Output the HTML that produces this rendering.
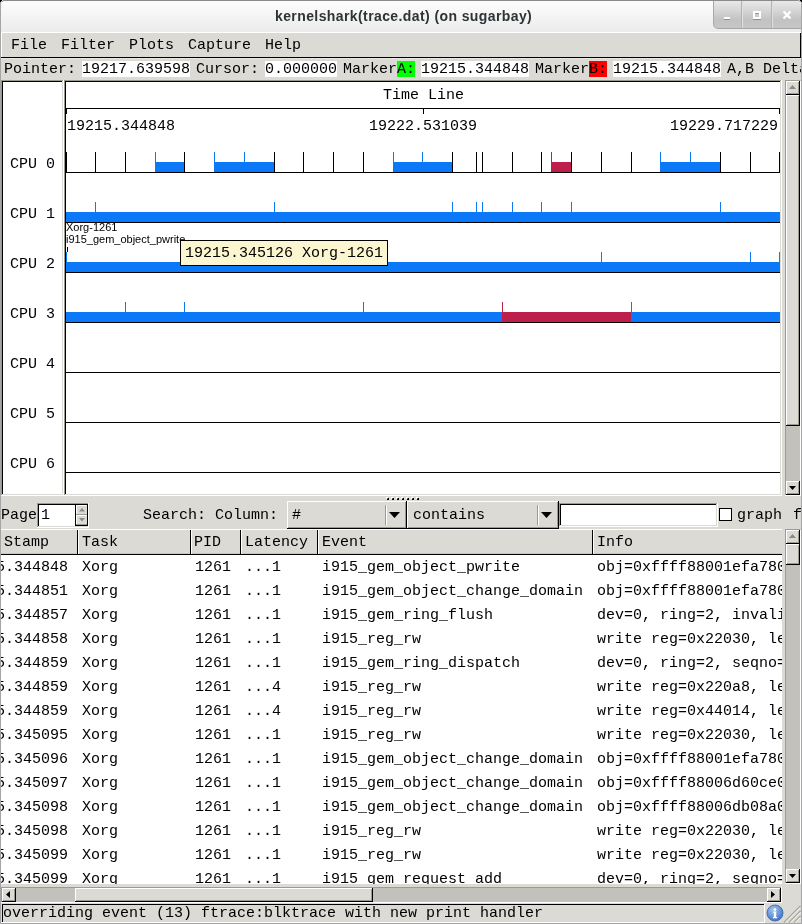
<!DOCTYPE html>
<html><head><meta charset="utf-8">
<style>
*{box-sizing:border-box;margin:0;padding:0}
html,body{width:802px;height:924px;overflow:hidden;background:#dcdad5}
body{position:relative;font-family:"Liberation Mono",monospace;font-size:15px;line-height:17px;color:#000}
.a{position:absolute}
svg.a{display:block}
.t{position:absolute;will-change:transform;white-space:pre;font-family:"Liberation Mono",monospace;font-size:15px;line-height:17px;color:#000}
.s{position:absolute;will-change:transform;white-space:pre;font-family:"Liberation Sans",sans-serif;font-size:11px;line-height:13px;color:#000}
</style></head><body>
<div class="a" style="left:0;top:0;width:802px;height:32px;background:linear-gradient(#fdfdfd,#ebebeb);border-top:1px solid #8a8a8a;border-radius:5px 5px 0 0"></div>
<div class="a" style="left:1px;top:32px;width:800px;height:1px;background:#fff;"></div>
<div class="a" style="left:275px;top:8px;will-change:transform;letter-spacing:0.4px;font:bold 14px/17px 'Liberation Sans',sans-serif;color:#2e3436;white-space:pre">kernelshark(trace.dat) (on sugarbay)</div>
<div class="a" style="left:713px;top:1px;width:88px;height:28px;background:linear-gradient(#e9e9e9 0%,#d6d6d6 35%,#c2c2c2 70%,#c6c6c6 100%);border-radius:0 5px 0 5px;border-left:1px solid #a9a9a9;border-bottom:1px solid #a5a5a5"></div>
<div class="a" style="left:741px;top:1px;width:1px;height:27px;background:#b3b3b3;"></div>
<div class="a" style="left:742px;top:1px;width:1px;height:27px;background:#e0e0e0;"></div>
<div class="a" style="left:771px;top:1px;width:1px;height:27px;background:#b3b3b3;"></div>
<div class="a" style="left:772px;top:1px;width:1px;height:27px;background:#e0e0e0;"></div>
<div class="a" style="left:724px;top:17px;width:6px;height:2px;background:#fff;"></div>
<div class="a" style="left:724px;top:19px;width:6px;height:1px;background:#8f8f8f;"></div>
<div class="a" style="left:753px;top:11px;width:8px;height:8px;border:2px solid #fff"></div>
<div class="a" style="left:755px;top:13px;width:4px;height:1px;background:#9a9a9a;"></div>
<div class="a" style="left:753px;top:19px;width:8px;height:1px;background:#8f8f8f;"></div>
<svg class="a" style="left:782px;top:10px" width="10" height="10"><path d="M1.5 1.5L8.5 8.5M8.5 1.5L1.5 8.5" stroke="#fff" stroke-width="2.2"/></svg>
<div class="a" style="left:1px;top:57px;width:800px;height:1px;background:#000;"></div>
<div class="a" style="left:800px;top:33px;width:1px;height:25px;background:#000;"></div>
<div class="a" style="left:1px;top:32px;width:1px;height:25px;background:#fff;"></div>
<div class="t" style="left:11px;top:37px;">File</div>
<div class="t" style="left:61px;top:37px;">Filter</div>
<div class="t" style="left:129px;top:37px;">Plots</div>
<div class="t" style="left:188px;top:37px;">Capture</div>
<div class="t" style="left:265px;top:37px;">Help</div>
<div class="a" style="left:1px;top:58px;width:800px;height:1px;background:#e8e6e1;"></div>
<div class="t" style="left:4px;top:61px;">Pointer:</div>
<div class="a" style="left:82px;top:61px;width:108px;height:16px;background:#fff;"></div>
<div class="t" style="left:82px;top:61px;">19217.639598</div>
<div class="a" style="left:265px;top:61px;width:72px;height:16px;background:#fff;"></div>
<div class="t" style="left:265px;top:61px;">0.000000</div>
<div class="a" style="left:397px;top:61px;width:18px;height:16px;background:#00ff00;"></div>
<div class="t" style="left:397px;top:61px;">A:</div>
<div class="a" style="left:421px;top:61px;width:108px;height:16px;background:#fff;"></div>
<div class="t" style="left:421px;top:61px;">19215.344848</div>
<div class="a" style="left:589px;top:61px;width:18px;height:16px;background:#ff0000;"></div>
<div class="t" style="left:589px;top:61px;">B:</div>
<div class="a" style="left:613px;top:61px;width:108px;height:16px;background:#fff;"></div>
<div class="t" style="left:613px;top:61px;">19215.344848</div>
<div class="t" style="left:196px;top:61px;">Cursor:</div>
<div class="t" style="left:343px;top:61px;">Marker</div>
<div class="t" style="left:535px;top:61px;">Marker</div>
<div class="t" style="left:727px;top:61px;">A,B Delta</div>
<div class="a" style="left:1px;top:80px;width:63px;height:416px;background:#fff;"></div>
<div class="a" style="left:1px;top:80px;width:62px;height:1px;background:#9d9a91;"></div>
<div class="a" style="left:1px;top:80px;width:1px;height:415px;background:#9d9a91;"></div>
<div class="a" style="left:2px;top:81px;width:60px;height:1px;background:#000;"></div>
<div class="a" style="left:2px;top:81px;width:1px;height:413px;background:#000;"></div>
<div class="a" style="left:62px;top:81px;width:1px;height:414px;background:#dcdad5;"></div>
<div class="a" style="left:2px;top:494px;width:61px;height:1px;background:#dcdad5;"></div>
<div class="a" style="left:3px;top:82px;width:59px;height:412px;background:#fff;"></div>
<div class="a" style="left:64px;top:80px;width:718px;height:416px;background:#fff;"></div>
<div class="a" style="left:64px;top:80px;width:717px;height:1px;background:#9d9a91;"></div>
<div class="a" style="left:64px;top:80px;width:1px;height:415px;background:#9d9a91;"></div>
<div class="a" style="left:65px;top:81px;width:715px;height:1px;background:#000;"></div>
<div class="a" style="left:65px;top:81px;width:1px;height:413px;background:#000;"></div>
<div class="a" style="left:780px;top:81px;width:1px;height:414px;background:#dcdad5;"></div>
<div class="a" style="left:65px;top:494px;width:716px;height:1px;background:#dcdad5;"></div>
<div class="a" style="left:66px;top:82px;width:714px;height:412px;background:#fff;"></div>
<div class="t" style="left:10px;top:156px;">CPU 0</div>
<div class="t" style="left:10px;top:206px;">CPU 1</div>
<div class="t" style="left:10px;top:256px;">CPU 2</div>
<div class="t" style="left:10px;top:306px;">CPU 3</div>
<div class="t" style="left:10px;top:356px;">CPU 4</div>
<div class="t" style="left:10px;top:406px;">CPU 5</div>
<div class="t" style="left:10px;top:456px;">CPU 6</div>
<div class="t" style="left:383px;top:87px;">Time Line</div>
<div class="a" style="left:66px;top:108px;width:714px;height:1px;background:#000;"></div>
<div class="a" style="left:66px;top:108px;width:1px;height:6px;background:#000;"></div>
<div class="a" style="left:423px;top:108px;width:1px;height:6px;background:#000;"></div>
<div class="a" style="left:779px;top:108px;width:1px;height:6px;background:#000;"></div>
<div class="t" style="left:67px;top:118px;">19215.344848</div>
<div class="t" style="left:369px;top:118px;">19222.531039</div>
<div class="t" style="left:670px;top:118px;">19229.717229</div>
<div class="a" style="left:155px;top:162px;width:30px;height:10px;background:#0a78f7;"></div>
<div class="a" style="left:214px;top:162px;width:61px;height:10px;background:#0a78f7;"></div>
<div class="a" style="left:393px;top:162px;width:60px;height:10px;background:#0a78f7;"></div>
<div class="a" style="left:660px;top:162px;width:61px;height:10px;background:#0a78f7;"></div>
<div class="a" style="left:551px;top:162px;width:21px;height:10px;background:#bd1e4b;"></div>
<div class="a" style="left:66px;top:152px;width:1px;height:20px;background:#000;"></div>
<div class="a" style="left:95px;top:152px;width:1px;height:20px;background:#000;"></div>
<div class="a" style="left:125px;top:152px;width:1px;height:20px;background:#000;"></div>
<div class="a" style="left:184px;top:152px;width:1px;height:20px;background:#000;"></div>
<div class="a" style="left:274px;top:152px;width:1px;height:20px;background:#000;"></div>
<div class="a" style="left:303px;top:152px;width:1px;height:20px;background:#000;"></div>
<div class="a" style="left:333px;top:152px;width:1px;height:20px;background:#000;"></div>
<div class="a" style="left:363px;top:152px;width:1px;height:20px;background:#000;"></div>
<div class="a" style="left:452px;top:152px;width:1px;height:20px;background:#000;"></div>
<div class="a" style="left:476px;top:152px;width:1px;height:20px;background:#000;"></div>
<div class="a" style="left:482px;top:152px;width:1px;height:20px;background:#000;"></div>
<div class="a" style="left:512px;top:152px;width:1px;height:20px;background:#000;"></div>
<div class="a" style="left:541px;top:152px;width:1px;height:20px;background:#000;"></div>
<div class="a" style="left:571px;top:152px;width:1px;height:20px;background:#000;"></div>
<div class="a" style="left:601px;top:152px;width:1px;height:20px;background:#000;"></div>
<div class="a" style="left:631px;top:152px;width:1px;height:20px;background:#000;"></div>
<div class="a" style="left:720px;top:152px;width:1px;height:20px;background:#000;"></div>
<div class="a" style="left:750px;top:152px;width:1px;height:20px;background:#000;"></div>
<div class="a" style="left:779px;top:152px;width:1px;height:20px;background:#000;"></div>
<div class="a" style="left:155px;top:152px;width:1px;height:20px;background:#0a78f7;"></div>
<div class="a" style="left:214px;top:152px;width:1px;height:20px;background:#0a78f7;"></div>
<div class="a" style="left:244px;top:152px;width:1px;height:20px;background:#0a78f7;"></div>
<div class="a" style="left:393px;top:152px;width:1px;height:20px;background:#0a78f7;"></div>
<div class="a" style="left:422px;top:152px;width:1px;height:20px;background:#0a78f7;"></div>
<div class="a" style="left:660px;top:152px;width:1px;height:20px;background:#0a78f7;"></div>
<div class="a" style="left:690px;top:152px;width:1px;height:20px;background:#0a78f7;"></div>
<div class="a" style="left:551px;top:152px;width:1px;height:20px;background:#bd1e4b;"></div>
<div class="a" style="left:66px;top:172px;width:714px;height:1px;background:#000;"></div>
<div class="a" style="left:66px;top:212px;width:714px;height:10px;background:#0a78f7;"></div>
<div class="a" style="left:95px;top:202px;width:1px;height:20px;background:#0a78f7;"></div>
<div class="a" style="left:274px;top:202px;width:1px;height:20px;background:#0a78f7;"></div>
<div class="a" style="left:452px;top:202px;width:1px;height:20px;background:#0a78f7;"></div>
<div class="a" style="left:476px;top:202px;width:1px;height:20px;background:#0a78f7;"></div>
<div class="a" style="left:482px;top:202px;width:1px;height:20px;background:#0a78f7;"></div>
<div class="a" style="left:512px;top:202px;width:1px;height:20px;background:#0a78f7;"></div>
<div class="a" style="left:541px;top:202px;width:1px;height:20px;background:#0a78f7;"></div>
<div class="a" style="left:571px;top:202px;width:1px;height:20px;background:#0a78f7;"></div>
<div class="a" style="left:720px;top:202px;width:1px;height:20px;background:#0a78f7;"></div>
<div class="a" style="left:66px;top:222px;width:714px;height:1px;background:#000;"></div>
<div class="a" style="left:66px;top:262px;width:714px;height:10px;background:#0a78f7;"></div>
<div class="a" style="left:66px;top:252px;width:1px;height:20px;background:#0a78f7;"></div>
<div class="a" style="left:601px;top:252px;width:1px;height:20px;background:#0a78f7;"></div>
<div class="a" style="left:750px;top:252px;width:1px;height:20px;background:#0a78f7;"></div>
<div class="a" style="left:779px;top:252px;width:1px;height:20px;background:#0a78f7;"></div>
<div class="a" style="left:66px;top:272px;width:714px;height:1px;background:#000;"></div>
<div class="a" style="left:67px;top:247px;width:1px;height:5px;background:#000;"></div>
<div class="a" style="left:66px;top:312px;width:437px;height:10px;background:#0a78f7;"></div>
<div class="a" style="left:502px;top:312px;width:130px;height:10px;background:#bd1e4b;"></div>
<div class="a" style="left:631px;top:312px;width:149px;height:10px;background:#0a78f7;"></div>
<div class="a" style="left:125px;top:302px;width:1px;height:20px;background:#0a78f7;"></div>
<div class="a" style="left:184px;top:302px;width:1px;height:20px;background:#0a78f7;"></div>
<div class="a" style="left:363px;top:302px;width:1px;height:20px;background:#0a78f7;"></div>
<div class="a" style="left:631px;top:302px;width:1px;height:20px;background:#0a78f7;"></div>
<div class="a" style="left:502px;top:302px;width:1px;height:20px;background:#bd1e4b;"></div>
<div class="a" style="left:66px;top:322px;width:714px;height:1px;background:#000;"></div>
<div class="a" style="left:66px;top:372px;width:714px;height:1px;background:#000;"></div>
<div class="a" style="left:66px;top:422px;width:714px;height:1px;background:#000;"></div>
<div class="a" style="left:66px;top:472px;width:714px;height:1px;background:#000;"></div>
<div class="s" style="left:66px;top:221px">Xorg-1261</div>
<div class="s" style="left:66px;top:233px">i915_gem_object_pwrite</div>
<div class="a" style="left:180px;top:240px;width:208px;height:26px;background:#000;"></div>
<div class="a" style="left:181px;top:241px;width:206px;height:24px;background:#fcf6d0;"></div>
<div class="t" style="left:185px;top:245px;">19215.345126 Xorg-1261</div>
<div class="a" style="left:785px;top:80px;width:16px;height:416px;background:#c3c1bb;"></div>
<div class="a" style="left:785px;top:80px;width:15px;height:1px;background:#9d9a91;"></div>
<div class="a" style="left:785px;top:80px;width:1px;height:415px;background:#9d9a91;"></div>
<div class="a" style="left:800px;top:81px;width:1px;height:415px;background:#fff;"></div>
<div class="a" style="left:785px;top:495px;width:16px;height:1px;background:#fff;"></div>
<div class="a" style="left:786px;top:81px;width:14px;height:14px;background:#dcdad5;"></div>
<div class="a" style="left:786px;top:81px;width:13px;height:1px;background:#fff;"></div>
<div class="a" style="left:786px;top:81px;width:1px;height:13px;background:#fff;"></div>
<div class="a" style="left:799px;top:81px;width:1px;height:14px;background:#000;"></div>
<div class="a" style="left:786px;top:94px;width:14px;height:1px;background:#000;"></div>
<div class="a" style="left:798px;top:82px;width:1px;height:12px;background:#9d9a91;"></div>
<div class="a" style="left:787px;top:93px;width:12px;height:1px;background:#9d9a91;"></div>
<svg class="a" style="left:789px;top:85px" width="7" height="4.0"><path d="M0 4.0 L3.5 0 L7 4.0Z" fill="#8b8a86"/></svg>
<div class="a" style="left:786px;top:95px;width:14px;height:331px;background:#dcdad5;"></div>
<div class="a" style="left:786px;top:95px;width:13px;height:1px;background:#fff;"></div>
<div class="a" style="left:786px;top:95px;width:1px;height:330px;background:#fff;"></div>
<div class="a" style="left:799px;top:95px;width:1px;height:331px;background:#000;"></div>
<div class="a" style="left:786px;top:425px;width:14px;height:1px;background:#000;"></div>
<div class="a" style="left:798px;top:96px;width:1px;height:329px;background:#9d9a91;"></div>
<div class="a" style="left:787px;top:424px;width:12px;height:1px;background:#9d9a91;"></div>
<div class="a" style="left:786px;top:481px;width:14px;height:14px;background:#dcdad5;"></div>
<div class="a" style="left:786px;top:481px;width:13px;height:1px;background:#fff;"></div>
<div class="a" style="left:786px;top:481px;width:1px;height:13px;background:#fff;"></div>
<div class="a" style="left:799px;top:481px;width:1px;height:14px;background:#000;"></div>
<div class="a" style="left:786px;top:494px;width:14px;height:1px;background:#000;"></div>
<div class="a" style="left:798px;top:482px;width:1px;height:12px;background:#9d9a91;"></div>
<div class="a" style="left:787px;top:493px;width:12px;height:1px;background:#9d9a91;"></div>
<svg class="a" style="left:789px;top:486px" width="7" height="4.0"><path d="M0 0 L3.5 4.0 L7 0Z" fill="#000"/></svg>
<div class="a" style="left:386px;top:497px;width:2px;height:1px;background:#fff;"></div>
<div class="a" style="left:386px;top:498px;width:1px;height:1px;background:#fff;"></div>
<div class="a" style="left:387px;top:498px;width:1px;height:1px;background:#6d6a64;"></div>
<div class="a" style="left:388px;top:498px;width:1px;height:1px;background:#000;"></div>
<div class="a" style="left:387px;top:499px;width:2px;height:1px;background:#000;"></div>
<div class="a" style="left:391px;top:497px;width:2px;height:1px;background:#fff;"></div>
<div class="a" style="left:391px;top:498px;width:1px;height:1px;background:#fff;"></div>
<div class="a" style="left:392px;top:498px;width:1px;height:1px;background:#6d6a64;"></div>
<div class="a" style="left:393px;top:498px;width:1px;height:1px;background:#000;"></div>
<div class="a" style="left:392px;top:499px;width:2px;height:1px;background:#000;"></div>
<div class="a" style="left:396px;top:497px;width:2px;height:1px;background:#fff;"></div>
<div class="a" style="left:396px;top:498px;width:1px;height:1px;background:#fff;"></div>
<div class="a" style="left:397px;top:498px;width:1px;height:1px;background:#6d6a64;"></div>
<div class="a" style="left:398px;top:498px;width:1px;height:1px;background:#000;"></div>
<div class="a" style="left:397px;top:499px;width:2px;height:1px;background:#000;"></div>
<div class="a" style="left:401px;top:497px;width:2px;height:1px;background:#fff;"></div>
<div class="a" style="left:401px;top:498px;width:1px;height:1px;background:#fff;"></div>
<div class="a" style="left:402px;top:498px;width:1px;height:1px;background:#6d6a64;"></div>
<div class="a" style="left:403px;top:498px;width:1px;height:1px;background:#000;"></div>
<div class="a" style="left:402px;top:499px;width:2px;height:1px;background:#000;"></div>
<div class="a" style="left:406px;top:497px;width:2px;height:1px;background:#fff;"></div>
<div class="a" style="left:406px;top:498px;width:1px;height:1px;background:#fff;"></div>
<div class="a" style="left:407px;top:498px;width:1px;height:1px;background:#6d6a64;"></div>
<div class="a" style="left:408px;top:498px;width:1px;height:1px;background:#000;"></div>
<div class="a" style="left:407px;top:499px;width:2px;height:1px;background:#000;"></div>
<div class="a" style="left:411px;top:497px;width:2px;height:1px;background:#fff;"></div>
<div class="a" style="left:411px;top:498px;width:1px;height:1px;background:#fff;"></div>
<div class="a" style="left:412px;top:498px;width:1px;height:1px;background:#6d6a64;"></div>
<div class="a" style="left:413px;top:498px;width:1px;height:1px;background:#000;"></div>
<div class="a" style="left:412px;top:499px;width:2px;height:1px;background:#000;"></div>
<div class="a" style="left:416px;top:497px;width:2px;height:1px;background:#fff;"></div>
<div class="a" style="left:416px;top:498px;width:1px;height:1px;background:#fff;"></div>
<div class="a" style="left:417px;top:498px;width:1px;height:1px;background:#6d6a64;"></div>
<div class="a" style="left:418px;top:498px;width:1px;height:1px;background:#000;"></div>
<div class="a" style="left:417px;top:499px;width:2px;height:1px;background:#000;"></div>
<div class="t" style="left:1px;top:507px;">Page</div>
<div class="a" style="left:37px;top:503px;width:52px;height:25px;background:#fff;"></div>
<div class="a" style="left:37px;top:503px;width:51px;height:1px;background:#9d9a91;"></div>
<div class="a" style="left:37px;top:503px;width:1px;height:24px;background:#9d9a91;"></div>
<div class="a" style="left:38px;top:504px;width:50px;height:1px;background:#000;"></div>
<div class="a" style="left:38px;top:504px;width:1px;height:22px;background:#000;"></div>
<div class="a" style="left:38px;top:526px;width:50px;height:1px;background:#dcdad5;"></div>
<div class="a" style="left:88px;top:504px;width:1px;height:24px;background:#fff;"></div>
<div class="a" style="left:75px;top:504px;width:1px;height:22px;background:#000;"></div>
<div class="a" style="left:87px;top:504px;width:1px;height:22px;background:#000;"></div>
<div class="a" style="left:76px;top:505px;width:11px;height:10px;background:#dcdad5;"></div>
<div class="a" style="left:76px;top:505px;width:11px;height:1px;background:#fff;"></div>
<div class="a" style="left:76px;top:505px;width:1px;height:10px;background:#fff;"></div>
<div class="a" style="left:76px;top:514px;width:11px;height:1px;background:#9d9a91;"></div>
<div class="a" style="left:76px;top:515px;width:11px;height:10px;background:#dcdad5;"></div>
<div class="a" style="left:76px;top:515px;width:11px;height:1px;background:#fff;"></div>
<div class="a" style="left:76px;top:515px;width:1px;height:10px;background:#fff;"></div>
<div class="a" style="left:76px;top:524px;width:11px;height:1px;background:#9d9a91;"></div>
<div class="a" style="left:75px;top:525px;width:13px;height:1px;background:#000;"></div>
<div class="t" style="left:41px;top:507px;">1</div>
<svg class="a" style="left:79px;top:508px" width="6" height="3.5"><path d="M0 3.5 L3.0 0 L6 3.5Z" fill="#8b8a86"/></svg>
<svg class="a" style="left:79px;top:518px" width="6" height="3.5"><path d="M0 0 L3.0 3.5 L6 0Z" fill="#8b8a86"/></svg>
<div class="t" style="left:143px;top:507px;">Search:</div>
<div class="t" style="left:215px;top:507px;">Column:</div>
<div class="a" style="left:287px;top:501px;width:120px;height:28px;background:#dcdad5;"></div>
<div class="a" style="left:287px;top:501px;width:119px;height:1px;background:#fff;"></div>
<div class="a" style="left:287px;top:501px;width:1px;height:27px;background:#fff;"></div>
<div class="a" style="left:406px;top:501px;width:1px;height:28px;background:#000;"></div>
<div class="a" style="left:287px;top:528px;width:120px;height:1px;background:#000;"></div>
<div class="a" style="left:405px;top:502px;width:1px;height:26px;background:#9d9a91;"></div>
<div class="a" style="left:288px;top:527px;width:118px;height:1px;background:#9d9a91;"></div>
<div class="t" style="left:292px;top:507px;">#</div>
<div class="a" style="left:385px;top:505px;width:1px;height:20px;background:#9d9a91;"></div>
<div class="a" style="left:386px;top:505px;width:1px;height:20px;background:#fff;"></div>
<svg class="a" style="left:389px;top:512px" width="11" height="6.0"><path d="M0 0 L5.5 6.0 L11 0Z" fill="#000"/></svg>
<div class="a" style="left:407px;top:501px;width:152px;height:28px;background:#dcdad5;"></div>
<div class="a" style="left:407px;top:501px;width:151px;height:1px;background:#fff;"></div>
<div class="a" style="left:407px;top:501px;width:1px;height:27px;background:#fff;"></div>
<div class="a" style="left:558px;top:501px;width:1px;height:28px;background:#000;"></div>
<div class="a" style="left:407px;top:528px;width:152px;height:1px;background:#000;"></div>
<div class="a" style="left:557px;top:502px;width:1px;height:26px;background:#9d9a91;"></div>
<div class="a" style="left:408px;top:527px;width:150px;height:1px;background:#9d9a91;"></div>
<div class="t" style="left:413px;top:507px;">contains</div>
<div class="a" style="left:537px;top:505px;width:1px;height:20px;background:#9d9a91;"></div>
<div class="a" style="left:538px;top:505px;width:1px;height:20px;background:#fff;"></div>
<svg class="a" style="left:541px;top:512px" width="11" height="6.0"><path d="M0 0 L5.5 6.0 L11 0Z" fill="#000"/></svg>
<div class="a" style="left:559px;top:503px;width:159px;height:24px;background:#fff;"></div>
<div class="a" style="left:559px;top:503px;width:158px;height:1px;background:#9d9a91;"></div>
<div class="a" style="left:559px;top:503px;width:1px;height:23px;background:#9d9a91;"></div>
<div class="a" style="left:560px;top:504px;width:156px;height:1px;background:#000;"></div>
<div class="a" style="left:560px;top:504px;width:1px;height:21px;background:#000;"></div>
<div class="a" style="left:716px;top:504px;width:1px;height:22px;background:#dcdad5;"></div>
<div class="a" style="left:560px;top:525px;width:157px;height:1px;background:#dcdad5;"></div>
<div class="a" style="left:561px;top:505px;width:155px;height:20px;background:#fff;"></div>
<div class="a" style="left:719px;top:508px;width:13px;height:13px;background:#000;"></div>
<div class="a" style="left:720px;top:509px;width:11px;height:11px;background:#fff;"></div>
<div class="t" style="left:737px;top:507px;">graph</div>
<div class="t" style="left:793px;top:507px;">f</div>
<div class="a" style="left:0px;top:529px;width:782px;height:1px;background:#fff;"></div>
<div class="a" style="left:0px;top:553px;width:782px;height:1px;background:#c9c6bf;"></div>
<div class="a" style="left:0px;top:554px;width:782px;height:1px;background:#000;"></div>
<div class="a" style="left:77px;top:530px;width:1px;height:24px;background:#000;"></div>
<div class="a" style="left:78px;top:530px;width:1px;height:24px;background:#fff;"></div>
<div class="a" style="left:190px;top:530px;width:1px;height:24px;background:#000;"></div>
<div class="a" style="left:191px;top:530px;width:1px;height:24px;background:#fff;"></div>
<div class="a" style="left:240px;top:530px;width:1px;height:24px;background:#000;"></div>
<div class="a" style="left:241px;top:530px;width:1px;height:24px;background:#fff;"></div>
<div class="a" style="left:317px;top:530px;width:1px;height:24px;background:#000;"></div>
<div class="a" style="left:318px;top:530px;width:1px;height:24px;background:#fff;"></div>
<div class="a" style="left:592px;top:530px;width:1px;height:24px;background:#000;"></div>
<div class="a" style="left:593px;top:530px;width:1px;height:24px;background:#fff;"></div>
<div class="a" style="left:1px;top:529px;width:781px;height:25px;overflow:hidden">
<div class="t" style="left:-42px;top:5px;">Time Stamp</div>
<div class="t" style="left:81px;top:5px;">Task</div>
<div class="t" style="left:193px;top:5px;">PID</div>
<div class="t" style="left:244px;top:5px;">Latency</div>
<div class="t" style="left:321px;top:5px;">Event</div>
<div class="t" style="left:596px;top:5px;">Info</div>
</div>
<div class="a" style="left:1px;top:555px;width:781px;height:329px;background:#fff;overflow:hidden">
<div class="t" style="left:-41px;top:4px;">19215.344848</div>
<div class="t" style="left:81px;top:4px;">Xorg</div>
<div class="t" style="left:194px;top:4px;">1261</div>
<div class="t" style="left:244px;top:4px;">...1</div>
<div class="t" style="left:321px;top:4px;">i915_gem_object_pwrite</div>
<div class="t" style="left:596px;top:4px;">obj=0xffff88001efa7800, offset=0, len=4096</div>
<div class="t" style="left:-41px;top:28px;">19215.344851</div>
<div class="t" style="left:81px;top:28px;">Xorg</div>
<div class="t" style="left:194px;top:28px;">1261</div>
<div class="t" style="left:244px;top:28px;">...1</div>
<div class="t" style="left:321px;top:28px;">i915_gem_object_change_domain</div>
<div class="t" style="left:596px;top:28px;">obj=0xffff88001efa7800, read=44=>44, write=00=>00</div>
<div class="t" style="left:-41px;top:52px;">19215.344857</div>
<div class="t" style="left:81px;top:52px;">Xorg</div>
<div class="t" style="left:194px;top:52px;">1261</div>
<div class="t" style="left:244px;top:52px;">...1</div>
<div class="t" style="left:321px;top:52px;">i915_gem_ring_flush</div>
<div class="t" style="left:596px;top:52px;">dev=0, ring=2, invalidate=0x2, flush=0x2</div>
<div class="t" style="left:-41px;top:76px;">19215.344858</div>
<div class="t" style="left:81px;top:76px;">Xorg</div>
<div class="t" style="left:194px;top:76px;">1261</div>
<div class="t" style="left:244px;top:76px;">...1</div>
<div class="t" style="left:321px;top:76px;">i915_reg_rw</div>
<div class="t" style="left:596px;top:76px;">write reg=0x22030, len=4, val=(0x0, 0x0)</div>
<div class="t" style="left:-41px;top:100px;">19215.344859</div>
<div class="t" style="left:81px;top:100px;">Xorg</div>
<div class="t" style="left:194px;top:100px;">1261</div>
<div class="t" style="left:244px;top:100px;">...1</div>
<div class="t" style="left:321px;top:100px;">i915_gem_ring_dispatch</div>
<div class="t" style="left:596px;top:100px;">dev=0, ring=2, seqno=12345</div>
<div class="t" style="left:-41px;top:124px;">19215.344859</div>
<div class="t" style="left:81px;top:124px;">Xorg</div>
<div class="t" style="left:194px;top:124px;">1261</div>
<div class="t" style="left:244px;top:124px;">...4</div>
<div class="t" style="left:321px;top:124px;">i915_reg_rw</div>
<div class="t" style="left:596px;top:124px;">write reg=0x220a8, len=4, val=(0x0, 0x0)</div>
<div class="t" style="left:-41px;top:148px;">19215.344859</div>
<div class="t" style="left:81px;top:148px;">Xorg</div>
<div class="t" style="left:194px;top:148px;">1261</div>
<div class="t" style="left:244px;top:148px;">...4</div>
<div class="t" style="left:321px;top:148px;">i915_reg_rw</div>
<div class="t" style="left:596px;top:148px;">write reg=0x44014, len=4, val=(0x0, 0x0)</div>
<div class="t" style="left:-41px;top:172px;">19215.345095</div>
<div class="t" style="left:81px;top:172px;">Xorg</div>
<div class="t" style="left:194px;top:172px;">1261</div>
<div class="t" style="left:244px;top:172px;">...1</div>
<div class="t" style="left:321px;top:172px;">i915_reg_rw</div>
<div class="t" style="left:596px;top:172px;">write reg=0x22030, len=4, val=(0x0, 0x0)</div>
<div class="t" style="left:-41px;top:196px;">19215.345096</div>
<div class="t" style="left:81px;top:196px;">Xorg</div>
<div class="t" style="left:194px;top:196px;">1261</div>
<div class="t" style="left:244px;top:196px;">...1</div>
<div class="t" style="left:321px;top:196px;">i915_gem_object_change_domain</div>
<div class="t" style="left:596px;top:196px;">obj=0xffff88001efa7800, read=44=>44</div>
<div class="t" style="left:-41px;top:220px;">19215.345097</div>
<div class="t" style="left:81px;top:220px;">Xorg</div>
<div class="t" style="left:194px;top:220px;">1261</div>
<div class="t" style="left:244px;top:220px;">...1</div>
<div class="t" style="left:321px;top:220px;">i915_gem_object_change_domain</div>
<div class="t" style="left:596px;top:220px;">obj=0xffff88006d60ce00, read=44=>44</div>
<div class="t" style="left:-41px;top:244px;">19215.345098</div>
<div class="t" style="left:81px;top:244px;">Xorg</div>
<div class="t" style="left:194px;top:244px;">1261</div>
<div class="t" style="left:244px;top:244px;">...1</div>
<div class="t" style="left:321px;top:244px;">i915_gem_object_change_domain</div>
<div class="t" style="left:596px;top:244px;">obj=0xffff88006db08a00, read=44=>44</div>
<div class="t" style="left:-41px;top:268px;">19215.345098</div>
<div class="t" style="left:81px;top:268px;">Xorg</div>
<div class="t" style="left:194px;top:268px;">1261</div>
<div class="t" style="left:244px;top:268px;">...1</div>
<div class="t" style="left:321px;top:268px;">i915_reg_rw</div>
<div class="t" style="left:596px;top:268px;">write reg=0x22030, len=4, val=(0x0, 0x0)</div>
<div class="t" style="left:-41px;top:292px;">19215.345099</div>
<div class="t" style="left:81px;top:292px;">Xorg</div>
<div class="t" style="left:194px;top:292px;">1261</div>
<div class="t" style="left:244px;top:292px;">...1</div>
<div class="t" style="left:321px;top:292px;">i915_reg_rw</div>
<div class="t" style="left:596px;top:292px;">write reg=0x22030, len=4, val=(0x0, 0x0)</div>
<div class="t" style="left:-41px;top:316px;">19215.345099</div>
<div class="t" style="left:81px;top:316px;">Xorg</div>
<div class="t" style="left:194px;top:316px;">1261</div>
<div class="t" style="left:244px;top:316px;">...1</div>
<div class="t" style="left:321px;top:316px;">i915_gem_request_add</div>
<div class="t" style="left:596px;top:316px;">dev=0, ring=2, seqno=12346</div>
</div>
<div class="a" style="left:785px;top:529px;width:16px;height:355px;background:#c3c1bb;"></div>
<div class="a" style="left:785px;top:529px;width:15px;height:1px;background:#9d9a91;"></div>
<div class="a" style="left:785px;top:529px;width:1px;height:354px;background:#9d9a91;"></div>
<div class="a" style="left:800px;top:530px;width:1px;height:354px;background:#fff;"></div>
<div class="a" style="left:785px;top:883px;width:16px;height:1px;background:#fff;"></div>
<div class="a" style="left:786px;top:530px;width:14px;height:14px;background:#dcdad5;"></div>
<div class="a" style="left:786px;top:530px;width:13px;height:1px;background:#fff;"></div>
<div class="a" style="left:786px;top:530px;width:1px;height:13px;background:#fff;"></div>
<div class="a" style="left:799px;top:530px;width:1px;height:14px;background:#000;"></div>
<div class="a" style="left:786px;top:543px;width:14px;height:1px;background:#000;"></div>
<div class="a" style="left:798px;top:531px;width:1px;height:12px;background:#9d9a91;"></div>
<div class="a" style="left:787px;top:542px;width:12px;height:1px;background:#9d9a91;"></div>
<svg class="a" style="left:789px;top:534px" width="7" height="4.0"><path d="M0 4.0 L3.5 0 L7 4.0Z" fill="#8b8a86"/></svg>
<div class="a" style="left:786px;top:544px;width:14px;height:21px;background:#dcdad5;"></div>
<div class="a" style="left:786px;top:544px;width:13px;height:1px;background:#fff;"></div>
<div class="a" style="left:786px;top:544px;width:1px;height:20px;background:#fff;"></div>
<div class="a" style="left:799px;top:544px;width:1px;height:21px;background:#000;"></div>
<div class="a" style="left:786px;top:564px;width:14px;height:1px;background:#000;"></div>
<div class="a" style="left:798px;top:545px;width:1px;height:19px;background:#9d9a91;"></div>
<div class="a" style="left:787px;top:563px;width:12px;height:1px;background:#9d9a91;"></div>
<div class="a" style="left:786px;top:869px;width:14px;height:14px;background:#dcdad5;"></div>
<div class="a" style="left:786px;top:869px;width:13px;height:1px;background:#fff;"></div>
<div class="a" style="left:786px;top:869px;width:1px;height:13px;background:#fff;"></div>
<div class="a" style="left:799px;top:869px;width:1px;height:14px;background:#000;"></div>
<div class="a" style="left:786px;top:882px;width:14px;height:1px;background:#000;"></div>
<div class="a" style="left:798px;top:870px;width:1px;height:12px;background:#9d9a91;"></div>
<div class="a" style="left:787px;top:881px;width:12px;height:1px;background:#9d9a91;"></div>
<svg class="a" style="left:789px;top:874px" width="7" height="4.0"><path d="M0 0 L3.5 4.0 L7 0Z" fill="#000"/></svg>
<div class="a" style="left:1px;top:887px;width:781px;height:16px;background:#c3c1bb;"></div>
<div class="a" style="left:1px;top:887px;width:780px;height:1px;background:#9d9a91;"></div>
<div class="a" style="left:1px;top:887px;width:1px;height:15px;background:#9d9a91;"></div>
<div class="a" style="left:781px;top:887px;width:1px;height:16px;background:#fff;"></div>
<div class="a" style="left:1px;top:902px;width:781px;height:1px;background:#fff;"></div>
<div class="a" style="left:2px;top:888px;width:14px;height:14px;background:#dcdad5;"></div>
<div class="a" style="left:2px;top:888px;width:13px;height:1px;background:#fff;"></div>
<div class="a" style="left:2px;top:888px;width:1px;height:13px;background:#fff;"></div>
<div class="a" style="left:15px;top:888px;width:1px;height:14px;background:#000;"></div>
<div class="a" style="left:2px;top:901px;width:14px;height:1px;background:#000;"></div>
<div class="a" style="left:14px;top:889px;width:1px;height:12px;background:#9d9a91;"></div>
<div class="a" style="left:3px;top:900px;width:12px;height:1px;background:#9d9a91;"></div>
<svg class="a" style="left:6px;top:891px" width="4.0" height="7"><path d="M4.0 0 L0 3.5 L4.0 7Z" fill="#000"/></svg>
<div class="a" style="left:75px;top:888px;width:298px;height:14px;background:#dcdad5;"></div>
<div class="a" style="left:75px;top:888px;width:297px;height:1px;background:#fff;"></div>
<div class="a" style="left:75px;top:888px;width:1px;height:13px;background:#fff;"></div>
<div class="a" style="left:372px;top:888px;width:1px;height:14px;background:#000;"></div>
<div class="a" style="left:75px;top:901px;width:298px;height:1px;background:#000;"></div>
<div class="a" style="left:371px;top:889px;width:1px;height:12px;background:#9d9a91;"></div>
<div class="a" style="left:76px;top:900px;width:296px;height:1px;background:#9d9a91;"></div>
<div class="a" style="left:767px;top:888px;width:14px;height:14px;background:#dcdad5;"></div>
<div class="a" style="left:767px;top:888px;width:13px;height:1px;background:#fff;"></div>
<div class="a" style="left:767px;top:888px;width:1px;height:13px;background:#fff;"></div>
<div class="a" style="left:780px;top:888px;width:1px;height:14px;background:#000;"></div>
<div class="a" style="left:767px;top:901px;width:14px;height:1px;background:#000;"></div>
<div class="a" style="left:779px;top:889px;width:1px;height:12px;background:#9d9a91;"></div>
<div class="a" style="left:768px;top:900px;width:12px;height:1px;background:#9d9a91;"></div>
<svg class="a" style="left:771px;top:891px" width="4.0" height="7"><path d="M0 0 L4.0 3.5 L0 7Z" fill="#000"/></svg>
<div class="a" style="left:1px;top:903px;width:764px;height:20px;background:#dcdad5;"></div>
<div class="a" style="left:2px;top:904px;width:763px;height:1px;background:#000;"></div>
<div class="a" style="left:2px;top:904px;width:1px;height:18px;background:#000;"></div>
<div class="a" style="left:1px;top:922px;width:764px;height:1px;background:#fff;"></div>
<div class="t" style="left:3px;top:905px;">overriding event (13) ftrace:blktrace with new print handler</div>
<div class="a" style="left:764px;top:904px;width:1px;height:19px;background:#fff;"></div>
<svg class="a" style="left:766px;top:904px" width="18" height="18"><defs><radialGradient id="g" cx="0.4" cy="0.3" r="0.75"><stop offset="0" stop-color="#a9c6ee"/><stop offset="0.6" stop-color="#6593d6"/><stop offset="1" stop-color="#3d6fbd"/></radialGradient></defs><circle cx="9" cy="9" r="8" fill="url(#g)" stroke="#3a69b0" stroke-width="0.9"/><path d="M7.3 7.6H10.2V12.9H11.1V14.3H6.9V12.9H7.8V9H7.3Z" fill="#fff"/><circle cx="9" cy="5.6" r="1.3" fill="#fff"/></svg>
<svg class="a" style="left:782px;top:904px" width="19" height="19"><g stroke-width="1.3"><path d="M2 18.5L18.5 2M7 18.5L18.5 7M12 18.5L18.5 12" stroke="#a29e96"/><path d="M3.2 18.5L18.5 3.2M8.2 18.5L18.5 8.2M13.2 18.5L18.5 13.2" stroke="#fff" stroke-width="0.9"/></g></svg>
<div class="a" style="left:0px;top:2px;width:1px;height:922px;background:#a5a5a5;"></div>
<div class="a" style="left:801px;top:2px;width:1px;height:922px;background:#a5a5a5;"></div>
<div class="a" style="left:0px;top:0px;width:2px;height:1px;background:#000;"></div>
<div class="a" style="left:0px;top:1px;width:1px;height:1px;background:#000;"></div>
<div class="a" style="left:800px;top:0px;width:2px;height:1px;background:#000;"></div>
<div class="a" style="left:801px;top:1px;width:1px;height:1px;background:#000;"></div>
<div class="a" style="left:0px;top:923px;width:802px;height:1px;background:#a5a5a5;"></div>
</body></html>
